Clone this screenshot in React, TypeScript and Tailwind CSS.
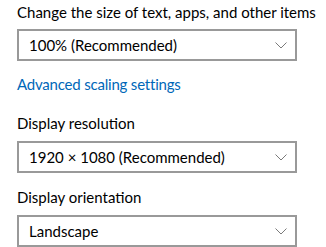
const Chevron = () => (
  <svg width="12" height="7" viewBox="0 0 12 7" fill="none" className="text-[#7a7a7a]">
    <path d="M0.5 0.5 L6 6 L11.5 0.5" stroke="currentColor" strokeWidth="1" />
  </svg>
);

const Select = ({ value }: { value: string }) => (
  <div className="flex h-[32px] w-[280px] items-center justify-between border-2 border-[#999999] bg-white pl-[10px] pr-[8px]">
    <span className="whitespace-nowrap text-[15px] leading-[20px] text-black">{value}</span>
    <Chevron />
  </div>
);

export default function App() {
  return (
    <div
      className="h-[247px] w-[326px] overflow-hidden bg-white pl-[17px] text-black"
      style={{ fontFamily: 'Lato, sans-serif' }}
    >
      <div className="whitespace-nowrap pt-[2px] text-[15px] leading-[20px]">Change the size of text, apps, and other items</div>
      <div className="mt-[7px]">
        <Select value="100% (Recommended)" />
      </div>
      <div className="mt-[13px] whitespace-nowrap text-[15px] leading-[20px] tracking-[-0.2px] text-[#0067b8]">Advanced scaling settings</div>
      <div className="mt-[19px] text-[15px] leading-[20px]">Display resolution</div>
      <div className="mt-[8px]">
        <Select value="1920 × 1080 (Recommended)" />
      </div>
      <div className="mt-[14px] text-[15px] leading-[20px]">Display orientation</div>
      <div className="mt-[8px]">
        <Select value="Landscape" />
      </div>
    </div>
  );
}
